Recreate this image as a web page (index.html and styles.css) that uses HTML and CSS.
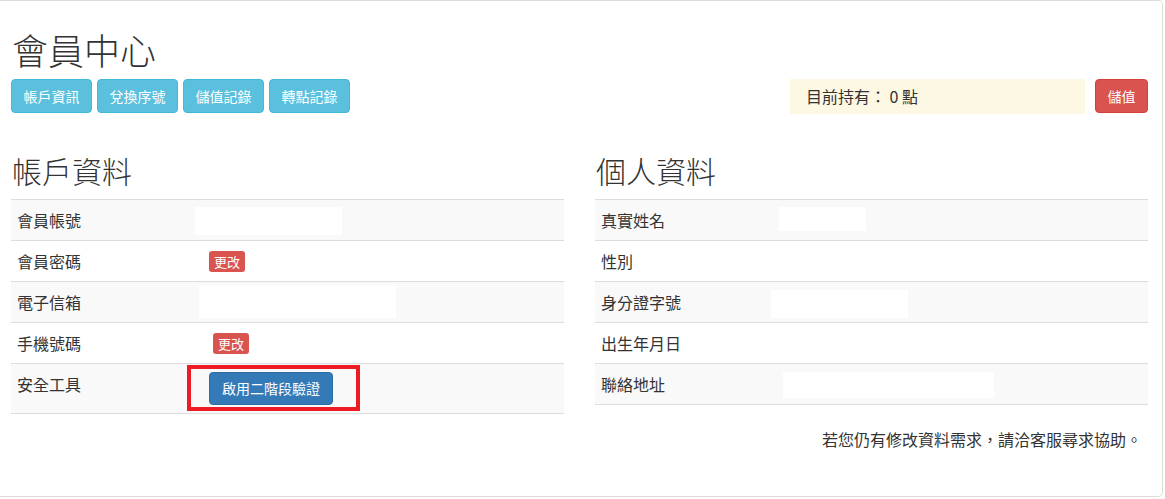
FILE: index.html
```html
<!DOCTYPE html>
<html lang="zh-Hant">
<head>
  <meta charset="UTF-8" />
  <meta name="viewport" content="width=device-width, initial-scale=1.0">
  <title>會員中心</title>
  <link rel="stylesheet" href="styles.css">
</head>
<body>

  <div class="panel">
    <div class="page">

      <h1>會員中心</h1>

      <!-- Top bar -->
      <div class="topbar">
        <div class="tabs">
          <button class="btn info">帳戶資訊</button>
          <button class="btn info">兌換序號</button>
          <button class="btn info">儲值記錄</button>
          <button class="btn info">轉點記錄</button>
        </div>
        <div class="wallet">
          <div class="points">目前持有： 0 點</div>
          <button class="btn danger">儲值</button>
        </div>
      </div>

      <div class="columns">

        <!-- Account -->
        <div class="col">
          <h2>帳戶資料</h2>
          <table class="info-table account">
            <tr>
              <td class="label">會員帳號</td>
              <td><span class="mask mask-l1"></span></td>
            </tr>
            <tr>
              <td class="label">會員密碼</td>
              <td><span class="badge badge-l2">更改</span></td>
            </tr>
            <tr>
              <td class="label">電子信箱</td>
              <td><span class="mask mask-l3"></span></td>
            </tr>
            <tr>
              <td class="label">手機號碼</td>
              <td><span class="badge badge-l4">更改</span></td>
            </tr>
            <tr>
              <td class="label">安全工具</td>
              <td><span class="marked"><button class="btn primary">啟用二階段驗證</button></span></td>
            </tr>
          </table>
        </div>

        <!-- Personal -->
        <div class="col">
          <h2>個人資料</h2>
          <table class="info-table personal">
            <tr>
              <td class="label">真實姓名</td>
              <td><span class="mask mask-r1"></span></td>
            </tr>
            <tr>
              <td class="label">性別</td>
              <td></td>
            </tr>
            <tr>
              <td class="label">身分證字號</td>
              <td><span class="mask mask-r3"></span></td>
            </tr>
            <tr>
              <td class="label">出生年月日</td>
              <td></td>
            </tr>
            <tr>
              <td class="label">聯絡地址</td>
              <td><span class="mask mask-r5"></span></td>
            </tr>
          </table>
          <p class="note">若您仍有修改資料需求，請洽客服尋求協助。</p>
        </div>

      </div>
    </div>
  </div>

</body>
</html>
```

FILE: styles.css
```css
body {
  margin: 0;
  background: #fff;
  color: #333;
  font-family: "Noto Sans CJK TC", "Liberation Sans", sans-serif;
  font-size: 16px;
}

.panel {
  width: 1163px;
  height: 497px;
  border: 1px solid #ddd;
  border-left: none;
  border-radius: 0 5px 5px 0;
  box-sizing: border-box;
  overflow: hidden;
}

.page {
  padding: 28px 14px 0 11px;
}

h1 {
  margin: 0 0 10px 1px;
  font-size: 36px;
  font-weight: 300;
  line-height: 40px;
}

h2 {
  margin: 0 0 12px 1px;
  font-size: 30px;
  font-weight: 300;
  line-height: 33px;
}

/* Buttons */
.btn {
  font-family: inherit;
  font-size: 14px;
  line-height: 20px;
  padding: 6px 11.5px;
  border: 1px solid transparent;
  border-radius: 4px;
  color: #fff;
  cursor: pointer;
}

.info { background: #5bc0de; border-color: #46b8da; }
.danger { background: #d9534f; border-color: #d43f3a; }
.primary { background: #337ab7; border-color: #2e6da4; }

.topbar {
  display: flex;
  justify-content: space-between;
  align-items: flex-start;
}

.tabs {
  display: flex;
  gap: 5px;
}

.wallet {
  display: flex;
  gap: 10px;
  align-items: flex-start;
}

.points {
  width: 295px;
  height: 35px;
  line-height: 35px;
  padding: 0 16px;
  box-sizing: border-box;
  background: #fcf8e3;
  font-size: 16px;
}

/* Columns */
.columns {
  display: grid;
  grid-template-columns: 1fr 1fr;
  column-gap: 31px;
  margin-top: 40px;
}

.info-table {
  width: 100%;
  border-collapse: collapse;
}

.info-table td {
  padding: 8px 6px;
  line-height: 24px;
  border-top: 1px solid #ddd;
  vertical-align: top;
}

.info-table tr:last-child td {
  border-bottom: 1px solid #ddd;
}

.info-table tr:nth-child(odd) td {
  background: #f9f9f9;
}

.account .label { width: 166px; }
.personal .label { width: 158px; }

/* Redacted values */
.mask {
  display: inline-block;
  vertical-align: top;
  background: #fff;
}

.mask-l1 { width: 147px; height: 28px; margin: -1px 0 -3px 0; }
.mask-l3 { width: 197px; height: 33px; margin: -5px 0 -4px 4px; }
.mask-r1 { width: 87px; height: 24px; margin: -1px 0 1px 8px; }
.mask-r3 { width: 137px; height: 28px; margin: 0 0 -4px 0; }
.mask-r5 { width: 211px; height: 26px; margin: 0 0 -2px 12px; }

.badge {
  display: inline-block;
  vertical-align: top;
  height: 21px;
  line-height: 21px;
  padding: 0 5px;
  margin-top: 2px;
  border-radius: 3px;
  background: #d9534f;
  color: #fff;
  font-size: 13px;
}

.badge-l2 { margin-left: 14px; }
.badge-l4 { margin-left: 18px; }

.marked {
  position: relative;
  display: inline-block;
  vertical-align: top;
  margin-left: 14px;
}

.marked .btn {
  display: block;
  line-height: 19px;
  padding: 6px 12px;
}

/* Annotation frame drawn over the cell */
.marked::after {
  content: "";
  position: absolute;
  top: -7px;
  bottom: -6px;
  left: -22px;
  right: -27px;
  border: 4px solid #ed1c24;
}

.note {
  margin: 22px 6px 0 0;
  text-align: right;
  line-height: 24px;
}
```
